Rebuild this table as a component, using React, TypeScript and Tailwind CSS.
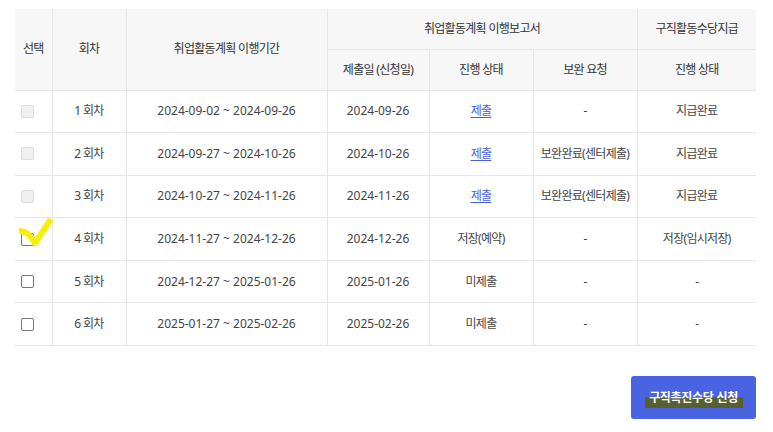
import React from 'react'

interface Row {
  round: number
  period: string
  submitted: string
  status: string
  statusLink: boolean
  supplement: string
  payment: string
  disabled: boolean
  marked?: boolean
}

const rows: Row[] = [
  { round: 1, period: '2024-09-02 ~ 2024-09-26', submitted: '2024-09-26', status: '제출', statusLink: true, supplement: '-', payment: '지급완료', disabled: true },
  { round: 2, period: '2024-09-27 ~ 2024-10-26', submitted: '2024-10-26', status: '제출', statusLink: true, supplement: '보완완료(센터제출)', payment: '지급완료', disabled: true },
  { round: 3, period: '2024-10-27 ~ 2024-11-26', submitted: '2024-11-26', status: '제출', statusLink: true, supplement: '보완완료(센터제출)', payment: '지급완료', disabled: true },
  { round: 4, period: '2024-11-27 ~ 2024-12-26', submitted: '2024-12-26', status: '저장(예약)', statusLink: false, supplement: '-', payment: '저장(임시저장)', disabled: false, marked: true },
  { round: 5, period: '2024-12-27 ~ 2025-01-26', submitted: '2025-01-26', status: '미제출', statusLink: false, supplement: '-', payment: '-', disabled: false },
  { round: 6, period: '2025-01-27 ~ 2025-02-26', submitted: '2025-02-26', status: '미제출', statusLink: false, supplement: '-', payment: '-', disabled: false },
]

function Checkbox({ disabled }: { disabled: boolean }) {
  return (
    <span
      className={
        disabled
          ? 'block w-[13px] h-[13px] rounded-[2px] border border-[#dcdcdc] bg-[#f0f0f0]'
          : 'block w-[13px] h-[13px] rounded-[2px] border border-[#767676] bg-white'
      }
    />
  )
}

// yellow marker tick drawn over row 4
function CheckMark() {
  return (
    <svg className="absolute left-[1px] top-[0px] pointer-events-none" width="40" height="30" viewBox="0 0 40 30">
      <path d="M3 13 Q12 12 19 25 L35 1" fill="none" stroke="#f7ee0a" strokeWidth="6" strokeLinejoin="round" />
    </svg>
  )
}

export default function App() {
  const th = 'font-normal text-[#333] border-[#e6e6e6] tracking-[-0.7px]'
  const td = 'text-[#444] border-r border-[#e6e6e6] text-center'
  const ko = 'tracking-[-0.7px]'
  return (
    <div className="w-[773px] h-[432px] bg-white pt-[9px] pl-[15px] font-['Noto_Sans','Noto_Sans_CJK_KR',sans-serif] text-[12px]">
      <table className="table-fixed border-collapse w-[741px]">
        <colgroup>
          <col className="w-[37px]" />
          <col className="w-[74px]" />
          <col className="w-[201px]" />
          <col className="w-[102px]" />
          <col className="w-[104px]" />
          <col className="w-[104px]" />
          <col className="w-[119px]" />
        </colgroup>
        <thead className="bg-[#f7f7f7]">
          <tr className="h-[40px]">
            <th rowSpan={2} className={`${th} border-r border-b`}>선택</th>
            <th rowSpan={2} className={`${th} border-r border-b`}>회차</th>
            <th rowSpan={2} className={`${th} border-r border-b`}>취업활동계획 이행기간</th>
            <th colSpan={3} className={`${th} border-r border-b`}>취업활동계획 이행보고서</th>
            <th className={`${th} border-b`}>구직활동수당지급</th>
          </tr>
          <tr className="h-[41px]">
            <th className={`${th} border-r border-b`}>제출일 (신청일)</th>
            <th className={`${th} border-r border-b`}>진행 상태</th>
            <th className={`${th} border-r border-b`}>보완 요청</th>
            <th className={`${th} border-b`}>진행 상태</th>
          </tr>
        </thead>
        <tbody>
          {rows.map(r => (
            <tr key={r.round} className="h-[42.6px] border-b border-[#e6e6e6]">
              <td className="relative border-r border-[#e6e6e6] pl-[6px]">
                <Checkbox disabled={r.disabled} />
                {r.marked && <CheckMark />}
              </td>
              <td className={`${td} ${ko}`}>{r.round} 회차</td>
              <td className={td}>{r.period}</td>
              <td className={td}>{r.submitted}</td>
              <td className={`${td} ${ko}`}>
                {r.statusLink ? <a className="text-[#4b5de4] underline underline-offset-2">{r.status}</a> : r.status}
              </td>
              <td className={`${td} ${ko}`}>{r.supplement}</td>
              <td className={`text-[#444] text-center ${ko}`}>{r.payment}</td>
            </tr>
          ))}
        </tbody>
      </table>
      <div className="w-[741px] flex justify-end mt-[30px]">
        <button className="w-[125px] h-[43px] rounded-[3px] bg-[#4a63e0] text-white text-[12px] font-bold tracking-[-0.3px] flex items-center justify-center">
          <span className="relative px-[2px]">
            <span className="absolute left-[-2px] right-[-3px] top-[8px] h-[11px] bg-[#56612f]" />
            <span className="relative">구직촉진수당 신청</span>
          </span>
        </button>
      </div>
    </div>
  )
}
